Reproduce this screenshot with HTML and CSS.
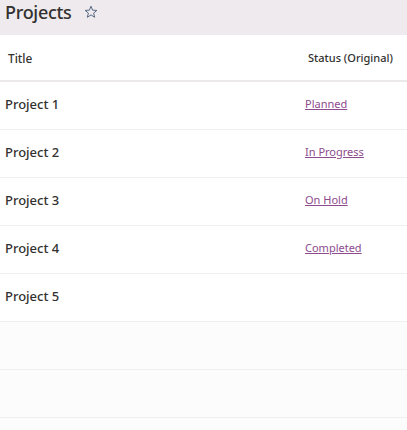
FILE: index.html
```html
<!DOCTYPE html>
<html>
<head>
<meta charset="utf-8">
<link rel="stylesheet" href="styles.css">
</head>
<body>
<header class="top">
  <h1 class="title">Projects</h1>
  <svg class="star" width="14" height="14" viewBox="0 0 14 14"><path d="M7 1.2 L8.6 5.2 L12.9 5.4 L9.6 8.1 L10.7 12.3 L7 9.9 L3.3 12.3 L4.4 8.1 L1.1 5.4 L5.4 5.2 Z" fill="none" stroke="#5a6b86" stroke-width="1" stroke-linejoin="round"/></svg>
</header>
<div class="list">
  <div class="row head">
    <div class="c1">Title</div>
    <div class="c2">Status (Original)</div>
  </div>
  <div class="row"><div class="c1 name">Project 1</div><div class="c2"><a href="#">Planned</a></div></div>
  <div class="row"><div class="c1 name">Project 2</div><div class="c2"><a href="#">In Progress</a></div></div>
  <div class="row"><div class="c1 name">Project 3</div><div class="c2"><a href="#">On Hold</a></div></div>
  <div class="row"><div class="c1 name">Project 4</div><div class="c2"><a href="#">Completed</a></div></div>
  <div class="row"><div class="c1 name">Project 5</div><div class="c2"></div></div>
  <div class="row empty"></div>
  <div class="row empty"></div>
</div>
</body>
</html>
```
FILE: styles.css
```css
html, body {
  margin: 0;
  padding: 0;
  background: #fcfcfc;
  font-family: "Noto Sans", "Open Sans", sans-serif;
  color: #323130;
  overflow: hidden;
}
.top {
  height: 35px;
  background: #eeeaed;
  display: flex;
  align-items: flex-start;
  padding-left: 5px;
  box-sizing: border-box;
}
.title {
  margin: 0;
  font-size: 18px;
  font-weight: 500;
  line-height: 24px;
  letter-spacing: -0.3px;
}
.star {
  margin-left: 12px;
  margin-top: 5px;
}
.list {
  background: #ffffff;
}
.row {
  display: flex;
  align-items: center;
  height: 48px;
  padding-bottom: 4px;
  border-bottom: 1px solid #f0eeee;
  box-sizing: border-box;
}
.row.head {
  height: 47px;
  padding-bottom: 0;
  border-bottom: 2px solid #ece9ea;
  font-size: 11.8px;
  font-weight: 500;
}
.head .c1 { padding-left: 8px; }
.head .c2 { padding-left: 300px; }
.c1 {
  width: 0;
  white-space: nowrap;
  padding-left: 5px;
}
.name {
  font-size: 13px;
  font-weight: 500;
}
.c2 {
  padding-left: 300px;
  white-space: nowrap;
  font-size: 11px;
}
.c2 a {
  color: #8d4b8d;
  text-decoration: underline;
}
.row.empty { background: #fcfcfc; }
```
